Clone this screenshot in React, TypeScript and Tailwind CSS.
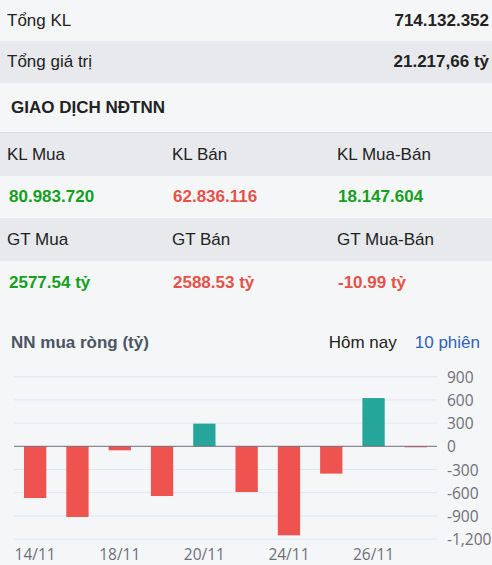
import React from "react";

const values = [-669, -914, -52, -643, 293, -591, -1151, -353, 624, -11];
const gridY = [900, 600, 300, 0, -300, -600, -900, -1200];
const zeroY = 86.3;
const unit = 23.2 / 300;
const xLabels: [number, string][] = [
  [0, "14/11"],
  [2, "18/11"],
  [4, "20/11"],
  [6, "24/11"],
  [8, "26/11"],
];

function Chart() {
  const left = 14;
  const right = 437;
  const band = (right - left) / 10;
  const barW = 22.3;
  return (
    <svg width={492} height={205} viewBox="0 0 492 205" className="block">
      {gridY.map((g) => {
        const y = zeroY - g * unit;
        return g === 0 ? null : (
          <line key={g} x1={left} x2={right} y1={y} y2={y} stroke="#e0e6f1" strokeWidth={1} />
        );
      })}
      {values.map((v, i) => {
        const x = left + i * band + (band - barW) / 2;
        const h = Math.max(Math.abs(v) * unit, 1);
        const y = v >= 0 ? zeroY - h : zeroY;
        return (
          <rect key={i} x={x} y={y} width={barW} height={h} fill={v >= 0 ? "#26a69a" : "#ef5350"} />
        );
      })}
      <line x1={left} x2={right} y1={zeroY} y2={zeroY} stroke="#6e7079" strokeWidth={1} />
      {gridY.map((g) => (
        <text
          key={"l" + g}
          x={447}
          y={zeroY - g * unit}
          dominantBaseline="central"
          fontSize={15.5}
          fill="#6e7079"
          fontFamily="'Open Sans', sans-serif"
        >
          {g === -1200 ? "-1,200" : String(g)}
        </text>
      ))}
      {xLabels.map(([i, t]) => (
        <text
          key={t}
          x={left + i * band + band / 2}
          y={194}
          textAnchor="middle"
          dominantBaseline="central"
          fontSize={15.5}
          fill="#6e7079"
          fontFamily="'Open Sans', sans-serif"
        >
          {t}
        </text>
      ))}
    </svg>
  );
}

export default function App() {
  return (
    <div className="w-[492px] h-[565px] overflow-hidden bg-[#f5f6f8] text-[#222222] font-['Liberation_Sans',Arial,sans-serif]">
      <div className="flex h-[41px] items-center justify-between pl-[7px] pr-[3px] text-[17px]">
        <span>Tổng KL</span>
        <span className="font-bold">714.132.352</span>
      </div>
      <div className="flex h-[42px] items-center justify-between bg-[#e7e9ed] pl-[7px] pr-[3px] text-[17px]">
        <span>Tổng giá trị</span>
        <span className="font-bold">21.217,66 tỷ</span>
      </div>
      <div className="flex h-[50px] items-center border-b border-[#d9dce1] pl-[11px] text-[17px] font-bold">
        GIAO DỊCH NĐTNN
      </div>
      <div className="grid h-[43px] grid-cols-[165px_165px_162px] items-center bg-[#e7e9ed] text-[17px]">
        <span className="pl-[7px]">KL Mua</span>
        <span className="pl-[7px]">KL Bán</span>
        <span className="pl-[7px]">KL Mua-Bán</span>
      </div>
      <div className="grid h-[42px] grid-cols-[165px_165px_162px] items-center text-[17px] font-bold">
        <span className="pl-[9px] text-[#14a01e]">80.983.720</span>
        <span className="pl-[8px] text-[#e5524a]">62.836.116</span>
        <span className="pl-[8px] text-[#14a01e]">18.147.604</span>
      </div>
      <div className="grid h-[43px] grid-cols-[165px_165px_162px] items-center bg-[#e7e9ed] text-[17px]">
        <span className="pl-[7px]">GT Mua</span>
        <span className="pl-[7px]">GT Bán</span>
        <span className="pl-[7px]">GT Mua-Bán</span>
      </div>
      <div className="grid h-[44px] grid-cols-[165px_165px_162px] items-center text-[17px] font-bold">
        <span className="pl-[9px] text-[#14a01e]">2577.54 tỷ</span>
        <span className="pl-[8px] text-[#e5524a]">2588.53 tỷ</span>
        <span className="pl-[8px] text-[#e5524a]">-10.99 tỷ</span>
      </div>
      <div className="flex h-[55px] items-end justify-between pb-[6px] pl-[11px] pr-[12px]">
        <span className="text-[17px] leading-[22px] font-bold text-[#4b5563]">NN mua ròng (tỷ)</span>
        <div className="flex gap-[18px] text-[17px] leading-[22px]">
          <span className="text-[#222222]">Hôm nay</span>
          <span className="text-[#2f62b8]">10 phiên</span>
        </div>
      </div>
      <Chart />
    </div>
  );
}
